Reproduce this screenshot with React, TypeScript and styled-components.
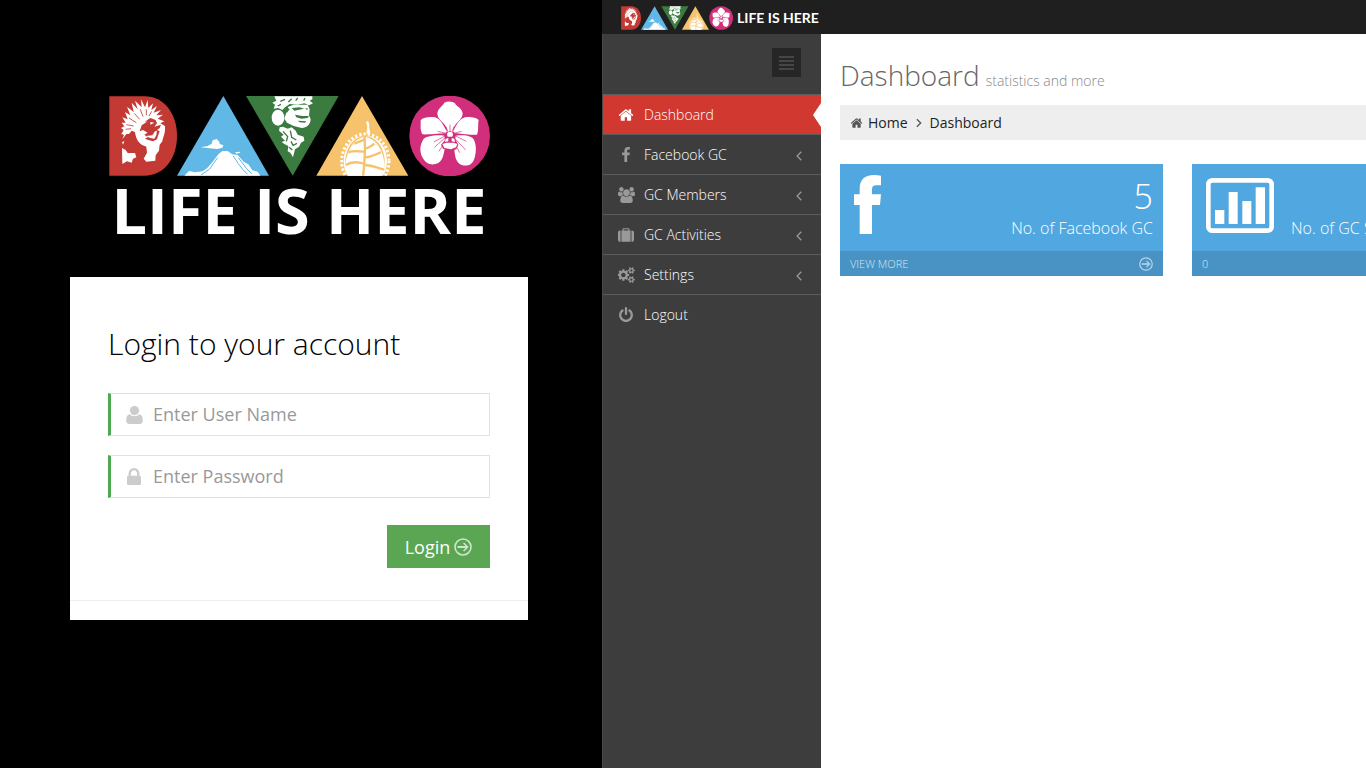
import React from "react";
import styled, { createGlobalStyle, css } from "styled-components";

const GlobalStyle = createGlobalStyle`
  *, *::before, *::after { box-sizing: border-box; }
  body {
    margin: 0;
    background: #000;
    font-family: "Open Sans", "Noto Sans", sans-serif;
    font-size: 14px;
    line-height: 20px;
  }
  button, input { font-family: inherit; }
`;

/* ---------- Icons ---------- */

const Glyph = styled.svg<{ $w: number; $h: number }>`
  display: block;
  flex: none;
  width: ${(p) => p.$w}px;
  height: ${(p) => p.$h}px;
  fill: currentColor;
`;

const paths = {
  home: "M1408 992v480q0 26-19 45t-45 19h-384v-384h-256v384h-384q-26 0-45-19t-19-45v-480q0-1 .5-3t.5-3l575-474 575 474q1 2 1 6zm223-69l-62 74q-8 9-21 11h-3q-13 0-21-7l-692-577-692 577q-12 8-24 7-13-2-21-11l-62-74q-8-10-7-23.5t11-21.5l719-599q32-26 76-26t76 26l244 204v-195q0-14 9-23t23-9h192q14 0 23 9t9 23v408l219 182q10 8 11 21.5t-7 23.5z",
  facebook: "M1343 12v264h-157q-86 0-116 36t-30 108v189h293l-39 296h-254v759h-306v-759h-255v-296h255v-218q0-186 104-288.5t277-102.5q147 0 228 12z",
  users: "M529 896q-162 5-265 128h-134q-82 0-138-40.5t-56-118.5q0-353 124-353 6 0 43.5 21t97.5 42.5 119 21.5q67 0 133-23-5 37-5 66 0 139 81 256zm1071 637q0 120-73 189.5t-194 69.5h-874q-121 0-194-69.5t-73-189.5q0-53 3.5-103.5t14-109 26.5-108.5 43-97.5 62-81 85.5-53.5 111.5-20q10 0 43 21.5t73 48 107 48 135 21.5 135-21.5 107-48 73-48 43-21.5q61 0 111.5 20t85.5 53.5 62 81 43 97.5 26.5 108.5 14 109 3.5 103.5zm-1024-1277q0 106-75 181t-181 75-181-75-75-181 75-181 181-75 181 75 75 181zm704 384q0 159-112.5 271.5t-271.5 112.5-271.5-112.5-112.5-271.5 112.5-271.5 271.5-112.5 271.5 112.5 112.5 271.5zm576 225q0 78-56 118.5t-138 40.5h-134q-103-123-265-128 81-117 81-256 0-29-5-66 66 23 133 23 59 0 119-21.5t97.5-42.5 43.5-21q124 0 124 353zm-128-609q0 106-75 181t-181 75-181-75-75-181 75-181 181-75 181 75 75 181z",
  suitcase: "M640 384h512v-128h-512v128zm-352 0v1280h-64q-92 0-158-66t-66-158v-832q0-92 66-158t158-66h64zm1120 0v1280h-1024v-1280h128v-160q0-40 28-68t68-28h576q40 0 68 28t28 68v160h128zm384 224v832q0 92-66 158t-158 66h-64v-1280h64q92 0 158 66t66 158z",
  cogs: "M832 896q0-106-75-181t-181-75-181 75-75 181 75 181 181 75 181-75 75-181zm768 512q0-52-38-90t-90-38-90 38-38 90q0 53 37.5 90.5t90.5 37.5 90.5-37.5 37.5-90.5zm0-1024q0-52-38-90t-90-38-90 38-38 90q0 53 37.5 90.5t90.5 37.5 90.5-37.5 37.5-90.5zm-384 421v185q0 10-7 19.5t-16 10.5l-155 24q-11 35-32 76 34 48 90 115 7 11 7 20 0 12-7 19-23 30-82.5 89.5t-78.5 59.5q-11 0-21-7l-115-90q-37 19-77 31-11 108-23 155-7 24-30 24h-186q-11 0-20-7.5t-10-17.5l-23-153q-34-10-75-31l-118 89q-7 7-20 7-11 0-21-8-144-133-144-160 0-9 7-19 10-14 41-53t47-61q-23-44-35-82l-152-24q-10-1-17-9.5t-7-19.5v-185q0-10 7-19.5t16-10.5l155-24q11-35 32-76-34-48-90-115-7-11-7-20 0-12 7-20 22-30 82-89t79-59q11 0 21 7l115 90q34-18 77-32 11-108 23-154 7-24 30-24h186q11 0 20 7.5t10 17.5l23 153q34 10 75 31l118-89q8-7 20-7 11 0 21 8 144 133 144 160 0 8-7 19-12 16-42 54t-45 60q23 48 34 82l152 23q10 2 17 10.5t7 19.5zm640 533v140q0 16-149 31-12 27-30 52 51 113 51 138 0 4-4 7-122 71-124 71-8 0-46-47t-52-68q-20 2-30 2t-30-2q-14 21-52 68t-46 47q-2 0-124-71-4-3-4-7 0-25 51-138-18-25-30-52-149-15-149-31v-140q0-16 149-31 13-29 30-52-51-113-51-138 0-4 4-7 4-2 35-20t59-34 30-16q8 0 46 46.5t52 67.5q20-2 30-2t30 2q51-71 92-112l6-2q4 0 124 70 4 3 4 7 0 25-51 138 17 23 30 52 149 15 149 31zm0-1024v140q0 16-149 31-12 27-30 52 51 113 51 138 0 4-4 7-122 71-124 71-8 0-46-47t-52-68q-20 2-30 2t-30-2q-14 21-52 68t-46 47q-2 0-124-71-4-3-4-7 0-25 51-138-18-25-30-52-149-15-149-31v-140q0-16 149-31 13-29 30-52-51-113-51-138 0-4 4-7 4-2 35-20t59-34 30-16q8 0 46 46.5t52 67.5q20-2 30-2t30 2q51-71 92-112l6-2q4 0 124 70 4 3 4 7 0 25-51 138 17 23 30 52 149 15 149 31z",
  power: "M1664 896q0 156-61 298t-164 245-245 164-298 61-298-61-245-164-164-245-61-298q0-182 80.5-343t226.5-270q43-32 95.5-25t83.5 50q32 42 24.5 94.5t-49.5 84.5q-98 74-151.5 181t-53.5 228q0 104 40.5 198.5t109.5 163.5 163.5 109.5 198.5 40.5 198.5-40.5 163.5-109.5 109.5-163.5 40.5-198.5q0-121-53.5-228t-151.5-181q-42-32-49.5-84.5t24.5-94.5q31-43 84-50t95 25q146 109 226.5 270t80.5 343zm-640-768v640q0 52-38 90t-90 38-90-38-38-90v-640q0-52 38-90t90-38 90 38 38 90z",
  lock: "M640 768h512v-192q0-106-75-181t-181-75-181 75-75 181v192zm832 96v576q0 40-28 68t-68 28h-960q-40 0-68-28t-28-68v-576q0-40 28-68t68-28h32v-192q0-184 132-316t316-132 316 132 132 316v192h32q40 0 68 28t28 68z",
};

const viewBoxes: Record<keyof typeof paths, string> = {
  home: "64 253 1664 1283",
  facebook: "479 0 864 1664",
  users: "-64 0 1920 1792",
  suitcase: "0 128 1792 1536",
  cogs: "0 0 1856 1792",
  power: "128 0 1536 1664",
  lock: "320 128 1152 1408",
};

type IconName = keyof typeof paths;

const Icon = ({ name, w, h }: { name: IconName; w: number; h: number }) => (
  <Glyph $w={w} $h={h} viewBox={viewBoxes[name]} aria-hidden="true">
    <path d={paths[name]} />
  </Glyph>
);

const UserIcon = () => (
  <Glyph $w={17} $h={18} viewBox="0 0 17 18" aria-hidden="true">
    <circle cx="8.5" cy="4.6" r="4.6" />
    <path d="M3.6 8.2C1 8.8 0.2 11 0.2 14.6C0.2 16.8 1.4 18 3.2 18H13.8C15.6 18 16.8 16.8 16.8 14.6C16.8 11 16 8.8 13.4 8.2C10.6 10.8 6.4 10.8 3.6 8.2Z" />
  </Glyph>
);

const ArrowIcon = ({ size }: { size: number }) => (
  <Glyph $w={size} $h={size} viewBox="0 0 18 18" aria-hidden="true">
    <g fill="none" stroke="currentColor" strokeWidth="1.6">
      <circle cx="9" cy="9" r="8" />
      <path d="M3.4 9H13.4" strokeWidth="2" />
      <path d="M9.6 5L13.6 9L9.6 13" />
    </g>
  </Glyph>
);

const Chevron = ({ back }: { back?: boolean }) => (
  <Glyph $w={6} $h={10} viewBox="0 0 6 10" aria-hidden="true">
    <path
      d={back ? "M5.3 0.8L1.1 5L5.3 9.2" : "M0.9 1.2L4.7 5L0.9 8.8"}
      fill="none"
      stroke="currentColor"
      strokeWidth="1.3"
    />
  </Glyph>
);

const FacebookMark = () => (
  <Glyph $w={27} $h={59} viewBox="0 0 81 177" aria-hidden="true">
    <path d="M81 2V31H66Q54 31 54 43V58H81L78 90H54V177H17V90H0V58H17V42Q17 0 60 0Q72 0 81 2Z" />
  </Glyph>
);

const ChartIcon = () => (
  <Glyph $w={68} $h={55} viewBox="0 0 204 165" aria-hidden="true">
    <rect x="7" y="7" width="190" height="151" rx="12" fill="none" stroke="currentColor" strokeWidth="14" />
    <path d="M27 96H55V138H27ZM68 42H95V138H68ZM109 69H136V138H109ZM149 28H177V138H149Z" />
  </Glyph>
);

const MenuIcon = () => (
  <Glyph $w={15} $h={14} viewBox="0 0 15 14" aria-hidden="true">
    <path d="M0 1H15M0 5H15M0 9H15M0 13H15" stroke="currentColor" strokeWidth="1" />
  </Glyph>
);

/* ---------- Brand emblem: eagle, mountain, chieftain, durian, orchid ---------- */

const Emblem = ({ w, h }: { w: number; h: number }) => (
  <Glyph $w={w} $h={h} viewBox="0 0 1143 240" role="img" aria-label="Davao">
    <path fill="#c33a34" d="M1 1H106C166 1 204 54 204 120S166 239 106 239H1Z" />
    <g transform="translate(-6 -12)">
      <path
        fill="#fff"
        d="M46 142L51 128L43 126L50 114L42 108L52 103L44 92L56 92L46 76L62 82L54 60L70 70L60 44L80 60L74 32L92 52L84 26L104 46L102 22L114 46L122 24L124 48L138 34L133 54L150 42L140 62L162 54L148 70L168 68L152 80L172 88L160 94L174 102C176 122 168 136 166 148L158 158L156 176L146 190L145 206L118 209L110 200L120 182L118 164L104 158C92 150 86 136 84 120L74 116L66 126L58 126Z"
      />
      <path fill="#c33a34" d="M104 100L122 88L112 90L130 78L146 84L150 94L142 104L162 98L158 108L150 114L158 118L152 134L150 142L138 148L124 144L114 140L122 136L112 128L122 122L108 114L98 118Z" />
      <path fill="#fff" d="M116 132L136 130L144 118L150 116L148 130L142 140L130 138ZM130 90L142 92L130 98Z" />
      <path
        fill="none"
        stroke="#c33a34"
        strokeWidth="2.5"
        d="M66 78L88 92M82 64L98 82M100 52L108 74M118 52L118 70M134 58L126 72M58 98L80 102M56 112L72 110"
      />
      <path fill="#fff" d="M45 168L56 174L62 183H84L88 196L78 200L74 212L60 208L46 216ZM45 150L52 148L48 158Z" />
    </g>

    <path fill="#61b7e6" d="M204 239L343 0L480 239Z" />
    <g transform="translate(-24 -33)" fill="#fff">
      <path d="M250 272L264 258L282 262L304 259L318 250L334 232L352 208L364 198L380 198L394 208L410 210L428 230L442 238L454 256L470 260L478 272Z" />
      <path d="M299 187L320 183L332 176L335 166L347 162L355 170L356 177L367 181L364 188L350 192L326 190ZM402 202L416 200L418 203L406 206Z" />
      <path fill="none" stroke="#61b7e6" strokeWidth="3" d="M300 270L326 252L350 218M396 212L412 236L426 254L440 268M412 218L436 250L452 266" />
    </g>

    <path fill="#3b7b40" d="M411 0H689L551 239Z" />
    <g transform="translate(396 -12)">
      <path fill="#fff" d="M100 13H214V22L206 26L216 34L204 40L190 34L170 38L146 36L132 46L124 54L112 48L98 50L102 38L94 32L106 26Z" />
      <ellipse cx="111" cy="77" rx="19" ry="24" fill="#fff" />
      <path fill="#fff" d="M142 44L158 38L200 38L206 52L204 70L209 82C208 98 198 108 182 108L158 102L138 92L130 80L136 62Z" />
      <path
        fill="#3b7b40"
        d="M152 48L176 46L190 50L174 53L160 56ZM192 48L202 50L198 54ZM162 68L184 72L204 72L200 78L182 80L166 76ZM170 86L196 88L192 92L176 91ZM138 46L146 52L138 62L132 58Z"
      />
      <path fill="none" stroke="#3b7b40" strokeWidth="4" d="M118 28L132 22M142 30L152 20M164 26L170 18M188 26L192 18M110 42L120 37" />
      <path fill="#fff" d="M116 106L126 104L140 110L152 106L164 116L170 128L188 134L190 146L180 152L174 164L162 172L156 196L148 182L140 178L142 162L130 156L122 150L132 146L120 134L128 128L114 116Z" />
      <path fill="none" stroke="#3b7b40" strokeWidth="4" d="M126 118L140 134L136 148M148 116L152 136L166 144M150 148L156 160L168 154M144 166L154 174" />
    </g>

    <path fill="#f6c26b" d="M622 239L759 0L898 239Z" />
    <svg x="600" y="0" width="320" height="239" viewBox="24 33 320 239">
      <ellipse cx="193" cy="228" rx="71" ry="81" fill="none" stroke="#fff" strokeWidth="9" strokeDasharray="7 6" />
      <ellipse cx="193" cy="228" rx="65" ry="76" fill="#fff" />
      <ellipse cx="192" cy="230" rx="59" ry="77" fill="#f6c26b" />
      <path fill="#fff" d="M190 155C158 162 138 195 133 238C134 264 142 282 160 288H220C244 276 252 256 250 234C246 196 226 160 190 155Z" />
      <path fill="none" stroke="#f6c26b" strokeWidth="7" d="M190 152C194 190 190 240 186 276M190 164L160 176M190 200C170 198 155 196 142 202M188 236C170 230 150 230 134 240M192 192C206 188 212 182 220 176M192 218C214 216 226 206 240 202M190 240C215 240 230 250 250 254" />
      <path fill="#fff" d="M194 112L200 108C208 116 202 124 206 134L208 144L196 146C198 134 202 122 194 112Z" />
    </svg>

    <circle cx="1022" cy="120" r="121" fill="#d12f7b" />
    <g transform="translate(696 -12)">
      <path fill="#fff" d="M289 66C290 48 304 44 310 32C320 26 334 28 342 34C346 44 364 48 365 66C362 88 340 90 334 120H320C316 90 292 90 289 66Z" />
      <path fill="#fff" d="M314 124C300 124 268 128 244 127C236 110 240 98 239 84C250 74 268 74 282 76C302 82 306 102 318 118Z" />
      <path fill="#fff" d="M342 124C356 124 384 130 408 128C414 112 410 98 413 84C402 74 386 74 372 76C352 82 346 102 336 118Z" />
      <path fill="#fff" d="M310 131C284 128 252 132 246 144C234 164 238 184 244 196C256 218 274 222 292 213C308 202 308 182 314 160Z" />
      <path fill="#fff" d="M344 131C370 128 394 130 400 146C408 166 404 186 400 200C394 220 374 226 356 216C340 204 342 182 338 160Z" />
      <path fill="none" stroke="#d12f7b" strokeWidth="2" d="M316 124L290 118M316 130L278 150M314 136L280 166M314 146L294 178M338 124L362 118M340 130L376 148M340 138L374 174M338 148L356 182M327 118V98M320 118L315 104M334 118L339 104" />
      <path fill="#d12f7b" d="M314 124L327 116L340 124L344 144L352 158L346 172L327 178L306 170L300 158L312 144Z" />
      <path fill="#fff" d="M318 128A9 9 0 0 1 336 128L334 134H320ZM304 156L316 152H338L349 156L345 166L330 172L310 168ZM314 140L322 138V148L312 150ZM332 138L340 140L342 150L332 148Z" />
    </g>
  </Glyph>
);

/* ---------- Layout ---------- */

const Page = styled.div`
  display: grid;
  grid-template-columns: minmax(0, 602fr) minmax(0, 764fr);
  min-height: 100vh;
`;

/* ---------- Login ---------- */

const LoginPanel = styled.section`
  display: flex;
  flex-direction: column;
  align-items: center;
  padding: 96px 74px 0 70px;
  background: #000;
`;

const Brand = styled.div`
  display: flex;
  flex-direction: column;
  align-items: center;
  margin-bottom: 33px;
`;

const BrandText = styled.span`
  color: #fff;
  font-size: 63px;
  font-weight: 700;
  line-height: 68px;
  white-space: nowrap;
`;

const LoginCard = styled.form`
  display: flex;
  flex-direction: column;
  width: 100%;
  padding: 45px 0 19px;
  background: #fff;
`;

const CardBody = styled.div`
  display: flex;
  flex-direction: column;
  padding: 0 38px 32px;
  border-bottom: 1px solid #eee;
`;

const LoginTitle = styled.h1`
  margin: 0 0 27px;
  color: #000;
  font-size: 30px;
  font-weight: 300;
  line-height: 44px;
  white-space: nowrap;
`;

const Field = styled.label`
  display: flex;
  align-items: center;
  height: 43px;
  margin-bottom: 19px;
  border: 1px solid #e2e2e2;
  border-left: 3px solid #4fa950;
  color: #ccc;
`;

const FieldIcon = styled.span`
  display: flex;
  justify-content: center;
  width: 42px;
  padding-left: 4px;
`;

const FieldInput = styled.input`
  flex: 1;
  min-width: 0;
  padding: 0 0 2px;
  border: 0;
  outline: 0;
  background: transparent;
  color: #333;
  font-size: 18px;
  line-height: 24px;
  &::placeholder {
    color: #999;
    opacity: 1;
  }
`;

const LoginButton = styled.button`
  display: flex;
  align-items: center;
  justify-content: center;
  gap: 4px;
  align-self: flex-end;
  width: 103px;
  height: 43px;
  margin-top: 8px;
  padding: 0;
  border: 0;
  background: #5aa652;
  color: #fff;
  font-size: 18px;
  line-height: 24px;
  svg { opacity: 0.7; }
`;

/* ---------- Dashboard ---------- */

const AppPanel = styled.section`
  display: flex;
  flex-direction: column;
  overflow: hidden;
  background: #fff;
`;

const TopBar = styled.header`
  display: flex;
  align-items: center;
  gap: 4px;
  height: 34px;
  padding: 2px 19px 0;
  background: #1f1f1f;
`;

const TopBarText = styled.span`
  color: #fff;
  font-family: Lato, "Open Sans", sans-serif;
  font-size: 14px;
  font-weight: 700;
  line-height: 24px;
  white-space: nowrap;
`;

const Columns = styled.div`
  display: flex;
  flex: 1;
`;

const Sidebar = styled.nav`
  flex: none;
  width: 219px;
  border-left: 1px solid #484848;
  background: #3d3d3d;
`;

const ToggleRow = styled.div`
  display: flex;
  justify-content: flex-end;
  height: 60px;
  padding: 14px 20px 0 0;
`;

const ToggleButton = styled.button`
  display: flex;
  align-items: center;
  justify-content: center;
  width: 29px;
  height: 29px;
  padding: 0;
  border: 0;
  background: #262626;
  color: #666;
`;

const NavList = styled.ul`
  margin: 0;
  padding: 0;
  list-style: none;
`;

const NavItem = styled.li`
  border-top: 1px solid #5c5c5c;
`;

const NavLink = styled.a<{ $active?: boolean }>`
  position: relative;
  display: flex;
  align-items: center;
  height: 39px;
  padding: 0 19px 0 14px;
  color: #fff;
  text-decoration: none;
  ${(p) =>
    p.$active &&
    css`
      background: #d03830;
    `}
`;

const NavIcon = styled.span<{ $active?: boolean }>`
  display: flex;
  justify-content: center;
  width: 18px;
  margin-right: 9px;
  color: ${(p) => (p.$active ? "#fff" : "#999")};
`;

const NavLabel = styled.span`
  flex: 1;
  font-weight: 300;
`;

const NavArrow = styled.span`
  padding-top: 2px;
  color: #999;
`;

const Notch = styled.span`
  position: absolute;
  top: 8px;
  right: 0;
  border: solid transparent;
  border-width: 12px 8px 12px 0;
  border-right-color: #fff;
`;

const Content = styled.main`
  flex: 1;
  min-width: 0;
  padding: 20px 0 0 19px;
`;

const PageTitle = styled.h2`
  display: flex;
  align-items: baseline;
  gap: 6px;
  margin: 0 0 9px;
  color: #666;
  font-size: 28px;
  font-weight: 300;
  line-height: 42px;
  white-space: nowrap;
`;

const PageSubtitle = styled.small`
  color: #888;
  font-size: 14px;
  line-height: 20px;
`;

const Breadcrumb = styled.nav`
  display: flex;
  align-items: center;
  height: 35px;
  margin-bottom: 24px;
  padding: 0 11px;
  background: #eee;
  color: #555;
`;

const Crumb = styled.a`
  color: #222;
  text-decoration: none;
`;

const CrumbHome = styled.span`
  margin-right: 5px;
`;

const CrumbSeparator = styled.span`
  margin: 0 8px;
`;

const Tiles = styled.div`
  display: flex;
  gap: 29px;
`;

const Tile = styled.article`
  flex: none;
  width: 323px;
  background: #51a7df;
  color: #fff;
`;

const TileBody = styled.div`
  display: flex;
  justify-content: space-between;
  height: 87px;
  padding: 11px 10px 0 14px;
`;

const TileIcon = styled.span<{ $drop?: boolean }>`
  padding-top: ${(p) => (p.$drop ? 3 : 0)}px;
`;

const TileDetails = styled.div<{ $wide?: boolean }>`
  display: flex;
  flex-direction: column;
  justify-content: flex-end;
  align-items: ${(p) => (p.$wide ? "flex-start" : "flex-end")};
  min-width: ${(p) => (p.$wide ? 214 : 0)}px;
  padding-bottom: 11px;
  font-weight: 300;
  white-space: nowrap;
`;

const TileNumber = styled.span`
  font-size: 34px;
  line-height: 40px;
`;

const TileLabel = styled.span`
  font-size: 16px;
  line-height: 24px;
`;

const TileFooter = styled.a`
  display: flex;
  align-items: center;
  justify-content: space-between;
  height: 25px;
  padding: 0 10px;
  background: #4893c4;
  color: #d3e7f4;
  font-size: 11px;
  font-weight: 300;
  line-height: 16px;
  text-decoration: none;
  text-transform: uppercase;
  svg { opacity: 0.8; }
`;

const navItems: { label: string; icon: IconName; w: number; h: number; active?: boolean; sub?: boolean }[] = [
  { label: "Dashboard", icon: "home", w: 15, h: 12, active: true },
  { label: "Facebook GC", icon: "facebook", w: 8, h: 15, sub: true },
  { label: "GC Members", icon: "users", w: 17, h: 16, sub: true },
  { label: "GC Activities", icon: "suitcase", w: 16, h: 14, sub: true },
  { label: "Settings", icon: "cogs", w: 17, h: 16, sub: true },
  { label: "Logout", icon: "power", w: 14, h: 15 },
];

export default function App() {
  return (
    <>
      <GlobalStyle />
      <Page>
        <LoginPanel>
          <Brand>
            <Emblem w={381} h={80} />
            <BrandText>LIFE IS HERE</BrandText>
          </Brand>
          <LoginCard onSubmit={(e) => e.preventDefault()}>
            <CardBody>
              <LoginTitle>Login to your account</LoginTitle>
              <Field>
                <FieldIcon><UserIcon /></FieldIcon>
                <FieldInput type="text" placeholder="Enter User Name" aria-label="User Name" />
              </Field>
              <Field>
                <FieldIcon><Icon name="lock" w={14} h={17} /></FieldIcon>
                <FieldInput type="password" placeholder="Enter Password" aria-label="Password" />
              </Field>
              <LoginButton type="submit">
                Login <ArrowIcon size={18} />
              </LoginButton>
            </CardBody>
          </LoginCard>
        </LoginPanel>

        <AppPanel>
          <TopBar>
            <Emblem w={112} h={24} />
            <TopBarText>LIFE IS HERE</TopBarText>
          </TopBar>
          <Columns>
            <Sidebar>
              <ToggleRow>
                <ToggleButton type="button" aria-label="Toggle menu"><MenuIcon /></ToggleButton>
              </ToggleRow>
              <NavList>
                {navItems.map((item) => (
                  <NavItem key={item.label}>
                    <NavLink href="#" $active={item.active}>
                      <NavIcon $active={item.active}><Icon name={item.icon} w={item.w} h={item.h} /></NavIcon>
                      <NavLabel>{item.label}</NavLabel>
                      {item.sub && <NavArrow><Chevron back /></NavArrow>}
                      {item.active && <Notch />}
                    </NavLink>
                  </NavItem>
                ))}
              </NavList>
            </Sidebar>
            <Content>
              <PageTitle>
                Dashboard <PageSubtitle>statistics and more</PageSubtitle>
              </PageTitle>
              <Breadcrumb aria-label="Breadcrumb">
                <CrumbHome><Icon name="home" w={12} h={10} /></CrumbHome>
                <Crumb href="#">Home</Crumb>
                <CrumbSeparator><Chevron /></CrumbSeparator>
                <Crumb href="#">Dashboard</Crumb>
              </Breadcrumb>
              <Tiles>
                <Tile>
                  <TileBody>
                    <TileIcon><FacebookMark /></TileIcon>
                    <TileDetails>
                      <TileNumber>5</TileNumber>
                      <TileLabel>No. of Facebook GC</TileLabel>
                    </TileDetails>
                  </TileBody>
                  <TileFooter href="#">View more <ArrowIcon size={14} /></TileFooter>
                </Tile>
                <Tile>
                  <TileBody>
                    <TileIcon $drop><ChartIcon /></TileIcon>
                    <TileDetails $wide>
                      <TileLabel>No. of GC S</TileLabel>
                    </TileDetails>
                  </TileBody>
                  <TileFooter href="#">0</TileFooter>
                </Tile>
              </Tiles>
            </Content>
          </Columns>
        </AppPanel>
      </Page>
    </>
  );
}
